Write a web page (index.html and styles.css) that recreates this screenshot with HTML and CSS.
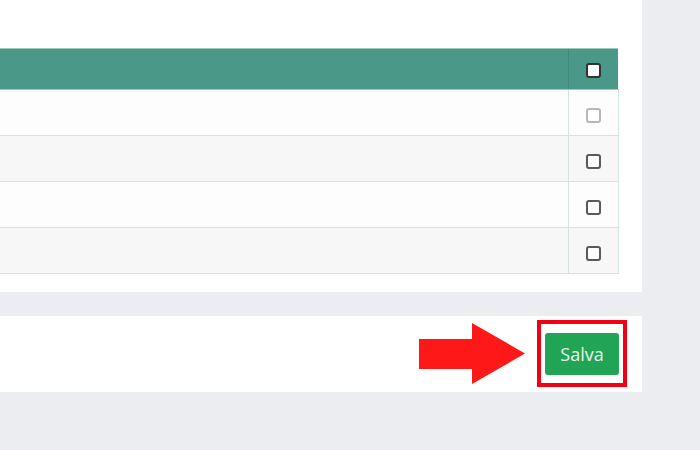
FILE: index.html
```html
<!DOCTYPE html>
<html lang="it">
<head>
  <meta charset="UTF-8" />
  <meta name="viewport" content="width=device-width, initial-scale=1" />
  <title>Salva</title>
  <link rel="stylesheet" href="styles.css">
</head>
<body>
  <div class="panel panel-table">
    <table class="grid">
      <thead>
        <tr>
          <th class="col-main"></th>
          <th class="col-check"><input type="checkbox" class="cb cb-head" /></th>
        </tr>
      </thead>
      <tbody>
        <tr>
          <td></td>
          <td class="col-check"><input type="checkbox" class="cb" disabled /></td>
        </tr>
        <tr>
          <td></td>
          <td class="col-check"><input type="checkbox" class="cb" /></td>
        </tr>
        <tr>
          <td></td>
          <td class="col-check"><input type="checkbox" class="cb" /></td>
        </tr>
        <tr>
          <td></td>
          <td class="col-check"><input type="checkbox" class="cb" /></td>
        </tr>
      </tbody>
    </table>
  </div>

  <div class="panel panel-actions">
    <svg class="arrow" width="106" height="61" viewBox="0 0 106 61">
      <polygon points="0,16 53,16 53,0 106,30.5 53,61 53,46 0,46" fill="#fe1818" />
    </svg>
    <div class="highlight">
      <button class="save-btn">Salva</button>
    </div>
  </div>
</body>
</html>
```

FILE: styles.css
```css
body {
  font-family: "Open Sans", "Liberation Sans", sans-serif;
  background: #ecedf0;
  margin: 0;
}
.panel {
  background: #fff;
  width: 642px;
  box-sizing: border-box;
}
.panel-table {
  padding: 48px 24px 18px 0;
  margin-bottom: 24px;
}
.grid {
  width: 617px;
  border-collapse: collapse;
  table-layout: fixed;
}
.grid th {
  background: #4a9887;
  height: 40px;
  padding: 0;
  border-top: 1px solid #9fc8bf;
  border-bottom: 1px solid #9fc8bf;
}
.grid th.col-check {
  border-left: 1px solid #3f8a7a;
}
.grid td {
  height: 45px;
  padding: 0;
  border-bottom: 1px solid #d3e5e2;
  background: #fdfdfd;
}
.grid tbody tr:nth-child(even) td {
  background: #f7f7f7;
}
.grid td.col-check {
  border-left: 1px solid #d3e5e2;
  border-right: 1px solid #d3e5e2;
}
.col-main {
  width: 568px;
}
.col-check {
  width: 49px;
  text-align: center;
}
.cb {
  appearance: none;
  -webkit-appearance: none;
  width: 15px;
  height: 15px;
  margin: 2px 0 0;
  border: 2px solid #5a5a5a;
  border-radius: 3px;
  background: #fff;
  vertical-align: middle;
}
.cb-head {
  border-color: #333;
  margin-top: 0;
}
.cb:disabled {
  border-color: #b8b8b8;
}
.panel-actions {
  height: 76px;
  display: flex;
  align-items: center;
  justify-content: flex-end;
  gap: 12px;
  padding: 0 15px 1px 0;
}
.arrow {
  display: block;
}
.highlight {
  border: 4px solid #f00012;
  padding: 9px 4px 8px;
}
.save-btn {
  display: block;
  width: 74px;
  height: 42px;
  border: none;
  border-radius: 3px;
  background: #22a457;
  color: #e8f6ec;
  font-family: "Open Sans", "Liberation Sans", sans-serif;
  font-size: 18px;
  cursor: pointer;
}
```
